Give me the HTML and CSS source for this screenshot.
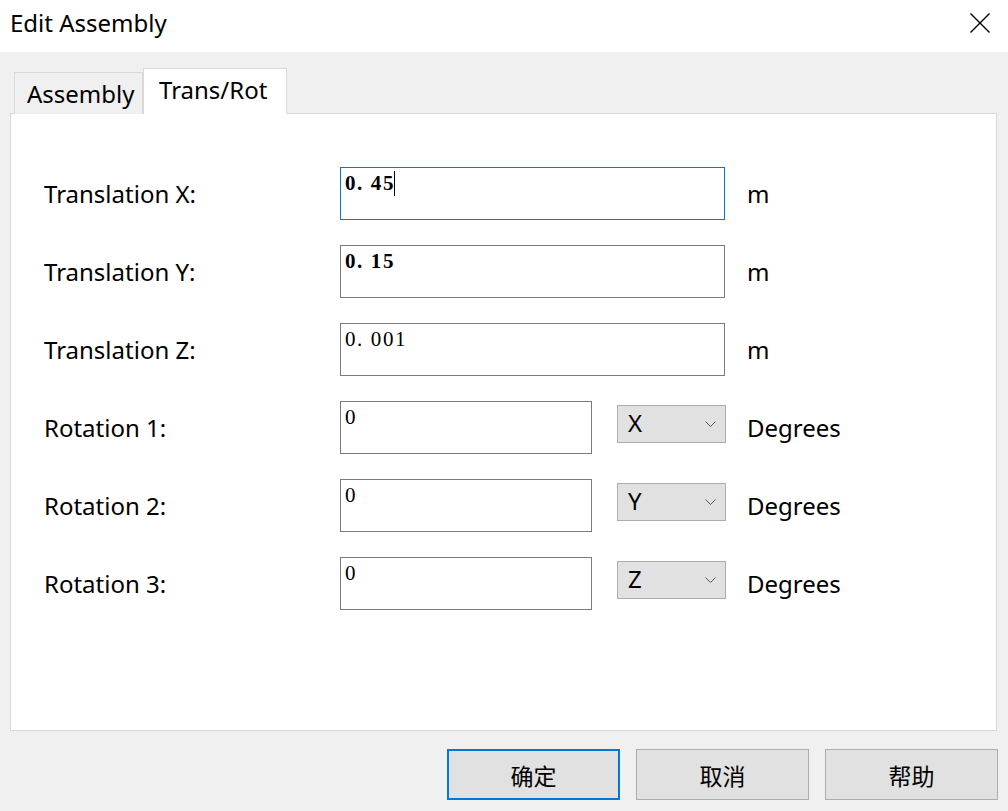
FILE: index.html
```
<!DOCTYPE html>
<html>
<head>
<meta charset="utf-8">
<link rel="stylesheet" href="styles.css">
</head>
<body>
<div class="window">
  <div class="titlebar">
    <span class="title">Edit Assembly</span>
    <svg class="close" width="20" height="20" viewBox="0 0 20 20"><path d="M0.5 0.5 L19.5 19.5 M19.5 0.5 L0.5 19.5" stroke="#000" stroke-width="1.4" fill="none"/></svg>
  </div>
  <div class="client">
    <div class="tabs">
      <div class="tab">Assembly</div>
      <div class="tab active">Trans/Rot</div>
    </div>
    <div class="panel">
      <div class="row">
        <div class="label">Translation X:</div>
        <div class="field"><div class="edit focused"><span class="val bold">0. 45</span><span class="caret"></span></div></div>
        <div class="unit">m</div>
      </div>
      <div class="row">
        <div class="label">Translation Y:</div>
        <div class="field"><div class="edit"><span class="val bold">0. 15</span></div></div>
        <div class="unit">m</div>
      </div>
      <div class="row">
        <div class="label">Translation Z:</div>
        <div class="field"><div class="edit"><span class="val">0. 001</span></div></div>
        <div class="unit">m</div>
      </div>
      <div class="row">
        <div class="label">Rotation 1:</div>
        <div class="field">
          <div class="edit short"><span class="val">0</span></div>
          <div class="combo"><span>X</span><svg class="chev" width="11" height="6" viewBox="0 0 11 6"><path d="M0.5 0.5 L5.5 5.5 L10.5 0.5" stroke="#555" stroke-width="1" fill="none"/></svg></div>
        </div>
        <div class="unit">Degrees</div>
      </div>
      <div class="row">
        <div class="label">Rotation 2:</div>
        <div class="field">
          <div class="edit short"><span class="val">0</span></div>
          <div class="combo"><span>Y</span><svg class="chev" width="11" height="6" viewBox="0 0 11 6"><path d="M0.5 0.5 L5.5 5.5 L10.5 0.5" stroke="#555" stroke-width="1" fill="none"/></svg></div>
        </div>
        <div class="unit">Degrees</div>
      </div>
      <div class="row">
        <div class="label">Rotation 3:</div>
        <div class="field">
          <div class="edit short"><span class="val">0</span></div>
          <div class="combo"><span>Z</span><svg class="chev" width="11" height="6" viewBox="0 0 11 6"><path d="M0.5 0.5 L5.5 5.5 L10.5 0.5" stroke="#555" stroke-width="1" fill="none"/></svg></div>
        </div>
        <div class="unit">Degrees</div>
      </div>
    </div>
    <div class="buttons">
      <div class="btn default">确定</div>
      <div class="btn">取消</div>
      <div class="btn">帮助</div>
    </div>
  </div>
</div>
</body>
</html>
```
FILE: styles.css
```
* { box-sizing: border-box; }
html, body { margin: 0; padding: 0; }
body {
  width: 1008px;
  height: 811px;
  overflow: hidden;
  font-family: "Noto Sans", "Noto Sans CJK SC", sans-serif;
  color: #000;
  background: #f0f0f0;
}
.window { width: 1008px; height: 811px; display: flex; flex-direction: column; }
.titlebar {
  height: 52px;
  background: #fff;
  display: flex;
  align-items: center;
  justify-content: space-between;
  padding: 0 18px 0 10px;
}
.title { font-size: 24px; line-height: 1; margin-top: -6px; }
.close { margin-top: -6px; }
.client { flex: 1; display: flex; flex-direction: column; background: #f0f0f0; }
.tabs {
  display: flex;
  align-items: flex-end;
  height: 62px;
  padding-left: 14px;
  margin-bottom: -1px;
  position: relative;
  z-index: 1;
}
.tab {
  height: 42px;
  padding: 0 12px 0 12px;
  border: 1px solid #d9d9d9;
  border-bottom: none;
  background: #f0f0f0;
  font-size: 24px;
  line-height: 42px;
  width: 129px;
}
.tab.active {
  height: 46px;
  width: 144px;
  background: #fff;
  line-height: 42px;
  padding-left: 15px;
}
.panel {
  margin: 0 11px 0 10px;
  height: 618px;
  background: #fff;
  border: 1px solid #d9d9d9;
  padding: 53px 0 0 33px;
  display: flex;
  flex-direction: column;
  gap: 25px;
}
.row { display: flex; align-items: center; height: 53px; }
.label { width: 296px; font-size: 24px; line-height: 1; margin-top: 0px; }
.field { width: 385px; height: 53px; display: flex; justify-content: space-between; }
.edit {
  width: 385px;
  height: 53px;
  border: 1px solid #7a7a7a;
  background: #fff;
  padding: 3px 0 0 4px;
  display: flex;
  align-items: flex-start;
}
.edit.focused { border-color: #0078d7; }
.edit.short { width: 252px; }
.val {
  font-family: "Liberation Serif", serif;
  font-size: 21px;
  letter-spacing: 1.6px;
  line-height: 24px;
}
.val.bold { font-weight: bold; }
.caret { width: 1px; height: 25px; background: #000; margin-left: -1px; margin-top: 0px; }
.combo {
  width: 109px;
  height: 38px;
  margin-top: 4px;
  margin-right: -1px;
  background: #e1e1e1;
  border: 1px solid #adadad;
  display: flex;
  align-items: center;
  justify-content: space-between;
  padding: 0 9px 0 10px;
  font-size: 24px;
}
.combo span { line-height: 1; margin-top: -3px; }
.unit { margin-left: 22px; font-size: 24px; line-height: 1; margin-top: 0px; }
.buttons {
  flex: 1;
  display: flex;
  justify-content: flex-end;
  align-items: flex-start;
  gap: 16px;
  padding: 18px 10px 0 0;
}
.btn {
  width: 173px;
  height: 51px;
  background: #e1e1e1;
  border: 1px solid #adadad;
  display: flex;
  align-items: center;
  justify-content: center;
  font-family: "Noto Sans CJK SC", sans-serif;
  font-size: 23px;
}
.btn.default { border: 2px solid #0078d7; }
```
